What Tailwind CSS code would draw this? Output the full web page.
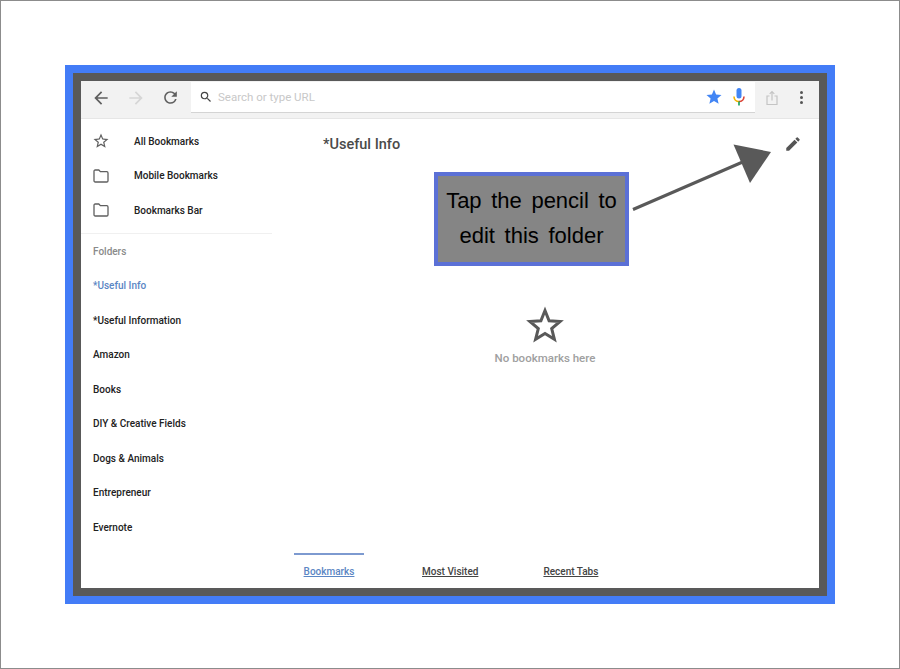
<!DOCTYPE html>
<html lang="en">
<head>
    <meta charset="UTF-8">
    <title>Useful Info - Bookmarks</title>
    <script src="https://cdn.jsdelivr.net/npm/@tailwindcss/browser@4"></script>
</head>
<body class="bg-white">
    <div class="relative w-[900px] h-[669px] border border-[#8c8c8c] bg-white pt-[64px] pl-[64px] font-['Roboto',sans-serif] overflow-hidden">
        <div class="w-[770px] h-[539px] border-[8px] border-[#437cf7]">
            <div class="w-[754px] h-[523px] border-[8px] border-[#595959] bg-white flex flex-col">

                <!-- toolbar -->
                <div class="h-[38px] shrink-0 bg-[#f2f2f2] border-b border-[#e6e6e6] flex items-start">
                    <div class="w-[110px] h-[33px] flex items-center pl-[10px] gap-[15px]">
                        <svg class="w-[20px] h-[20px]" viewBox="0 0 24 24" fill="#5f5f5f"><path d="M20 11H7.83l5.59-5.59L12 4l-8 8 8 8 1.41-1.41L7.83 13H20v-2z"/></svg>
                        <svg class="w-[20px] h-[20px]" viewBox="0 0 24 24" fill="#d6d6d6"><path d="M12 4l-1.41 1.41L16.17 11H4v2h12.17l-5.58 5.59L12 20l8-8z"/></svg>
                        <svg class="w-[19px] h-[19px]" viewBox="0 0 24 24" fill="#5f5f5f"><path d="M17.65 6.35A7.958 7.958 0 0 0 12 4c-4.42 0-7.99 3.58-7.99 8s3.57 8 7.99 8c3.73 0 6.84-2.55 7.73-6h-2.08A5.99 5.99 0 0 1 12 18c-3.31 0-6-2.69-6-6s2.69-6 6-6c1.66 0 3.14.69 4.22 1.78L13 11h7V4l-2.35 2.35z"/></svg>
                    </div>
                    <div class="w-[564px] h-[31px] mt-px bg-white border-b border-[#d4d4d4] flex items-center pl-[8px] pr-[9px]">
                        <svg class="w-[14px] h-[14px] shrink-0" viewBox="0 0 24 24" fill="#444"><path d="M15.5 14h-.79l-.28-.27A6.47 6.47 0 0 0 16 9.5 6.5 6.5 0 1 0 9.5 16c1.61 0 3.09-.59 4.23-1.57l.27.28v.79l5 4.99L20.49 19l-4.99-5zm-6 0C7.01 14 5 11.99 5 9.5S7.01 5 9.5 5 14 7.01 14 9.5 11.99 14 9.5 14z"/></svg>
                        <span class="ml-[5px] mt-[2px] text-[11.5px] text-[#c8c8c8]">Search or type URL</span>
                        <svg class="w-[18px] h-[18px] ml-auto mr-[3px]" viewBox="0 0 24 24" fill="#4285f4"><path d="M12 17.27 18.18 21l-1.64-7.03L22 9.24l-7.19-.61L12 2 9.19 8.63 2 9.24l5.46 4.73L5.82 21z"/></svg>
                        <svg class="w-[14px] h-[20px] ml-[6px]" viewBox="0 0 14 20">
                            <rect x="4.5" y="1" width="5" height="10.5" rx="2.5" fill="#4285f4"/>
                            <path d="M2 9.5c0 3 2.2 5 5 5" fill="none" stroke="#f4b400" stroke-width="1.6"/>
                            <path d="M12 9.5c0 3-2.2 5-5 5" fill="none" stroke="#db4437" stroke-width="1.6"/>
                            <rect x="6.2" y="14.5" width="1.6" height="4" fill="#0f9d58"/>
                        </svg>
                    </div>
                    <div class="flex-1 h-[33px] flex items-center pl-[10px]">
                        <svg class="w-[14px] h-[16px]" viewBox="0 0 14 16" fill="none" stroke="#c4c4c4" stroke-width="1.2"><path d="M4.5 6H2v8.5h10V6H9.5"/><path d="M7 10.5V1.5M4.7 3.8 7 1.5l2.3 2.3"/></svg>
                        <div class="ml-[21px] flex flex-col gap-[2px]">
                            <span class="block w-[3px] h-[3px] rounded-full bg-[#555]"></span>
                            <span class="block w-[3px] h-[3px] rounded-full bg-[#555]"></span>
                            <span class="block w-[3px] h-[3px] rounded-full bg-[#555]"></span>
                        </div>
                    </div>
                </div>

                <div class="flex-1 flex min-h-0">
                    <!-- sidebar -->
                    <div class="w-[213px] shrink-0 pt-[5px]">
                        <div class="w-[191px] border-b border-[#f0f0f0] pb-[5.5px]">
                            <div class="h-[34.5px] flex items-center pl-[11px] gap-[24px] text-[10px] font-medium text-[#222]">
                                <svg class="w-[18px] h-[18px]" viewBox="0 0 24 24" fill="#5f5f5f"><path d="M22 9.24l-7.19-.62L12 2 9.19 8.63 2 9.24l5.46 4.73L5.82 21 12 17.27 18.18 21l-1.63-7.03L22 9.24zM12 15.4l-3.76 2.27 1-4.28-3.32-2.88 4.38-.38L12 6.1l1.71 4.04 4.38.38-3.32 2.88 1 4.28L12 15.4z"/></svg>
                                All Bookmarks
                            </div>
                            <div class="h-[34.5px] flex items-center pl-[12px] gap-[25px] text-[10px] font-medium text-[#222]">
                                <svg class="w-[16px] h-[14px]" viewBox="0 0 16 14" fill="none" stroke="#5f5f5f" stroke-width="1.3"><path d="M1 2.2c0-.7.5-1.2 1.2-1.2h3.6l1.6 1.7h6.4c.7 0 1.2.5 1.2 1.2v7.9c0 .7-.5 1.2-1.2 1.2H2.2c-.7 0-1.2-.5-1.2-1.2z"/></svg>
                                Mobile Bookmarks
                            </div>
                            <div class="h-[34.5px] flex items-center pl-[12px] gap-[25px] text-[10px] font-medium text-[#222]">
                                <svg class="w-[16px] h-[14px]" viewBox="0 0 16 14" fill="none" stroke="#5f5f5f" stroke-width="1.3"><path d="M1 2.2c0-.7.5-1.2 1.2-1.2h3.6l1.6 1.7h6.4c.7 0 1.2.5 1.2 1.2v7.9c0 .7-.5 1.2-1.2 1.2H2.2c-.7 0-1.2-.5-1.2-1.2z"/></svg>
                                Bookmarks Bar
                            </div>
                        </div>
                        <div class="pl-[12px] text-[10px] font-medium">
                            <div class="h-[34.5px] flex items-center text-[#8a8a8a]">Folders</div>
                            <div class="h-[34.5px] flex items-center text-[#5b86c4]">*Useful Info</div>
                            <div class="h-[34.5px] flex items-center text-[#222]">*Useful Information</div>
                            <div class="h-[34.5px] flex items-center text-[#222]">Amazon</div>
                            <div class="h-[34.5px] flex items-center text-[#222]">Books</div>
                            <div class="h-[34.5px] flex items-center text-[#222]">DIY &amp; Creative Fields</div>
                            <div class="h-[34.5px] flex items-center text-[#222]">Dogs &amp; Animals</div>
                            <div class="h-[34.5px] flex items-center text-[#222]">Entrepreneur</div>
                            <div class="h-[34.5px] flex items-center text-[#222]">Evernote</div>
                        </div>
                    </div>

                    <!-- main panel -->
                    <div class="flex-1 flex flex-col min-w-0">
                        <div class="flex items-center justify-between h-[50px] pl-[29px] pr-[17px]">
                            <span class="mt-[1px] text-[14.5px] font-medium text-[#4a4a4a]">*Useful Info</span>
                            <svg class="w-[18px] h-[18px]" viewBox="0 0 24 24" fill="#555"><path d="M3 17.25V21h3.75L17.81 9.94l-3.75-3.75L3 17.25zM20.71 7.04a1 1 0 0 0 0-1.41l-2.34-2.34a1 1 0 0 0-1.41 0l-1.83 1.83 3.75 3.75 1.83-1.83z"/></svg>
                        </div>
                        <div class="flex flex-col items-center pt-[137px] pr-[23px]">
                            <svg class="w-[38px] h-[38px]" viewBox="0 0 38 38" fill="none" stroke="#595959" stroke-width="3"><path d="M19 4.5l4.1 10.2 11 .8-8.4 7.1 2.7 10.7-9.4-5.8-9.4 5.8 2.7-10.7-8.4-7.1 11-.8z"/></svg>
                            <span class="mt-[6px] text-[11.5px] font-medium text-[#a0a0a0]">No bookmarks here</span>
                        </div>
                        <div class="mt-auto h-[35px] flex text-[10px] font-medium">
                            <div class="w-[70px] border-t-2 border-[#7d9ad0] flex justify-center pt-[9px] text-[#5b86c4] underline">Bookmarks</div>
                            <div class="ml-[58px] pt-[11px] text-[#444] underline">Most Visited</div>
                            <div class="ml-[65px] pt-[11px] text-[#444] underline">Recent Tabs</div>
                        </div>
                    </div>
                </div>
            </div>
        </div>

        <!-- callout over the page -->
        <div class="absolute left-[433px] top-[171px] w-[195px] h-[94px] border-[4px] border-[#5b70d6] bg-[#858585] flex flex-col items-center justify-center pb-[3px] text-[22px] leading-[35px] text-black font-['Liberation_Sans',sans-serif] [word-spacing:3.5px]">
            <div>Tap the pencil to</div>
            <div>edit this folder</div>
        </div>

        <!-- arrow over the page -->
        <svg class="absolute left-[-1px] top-[-1px]" width="900" height="669" viewBox="0 0 900 669">
            <path d="M633 209.5 745 161" stroke="#595959" stroke-width="3" fill="none"/>
            <path d="M733.5 144.5 771 152 750 183z" fill="#595959"/>
        </svg>
    </div>
</body>
</html>
